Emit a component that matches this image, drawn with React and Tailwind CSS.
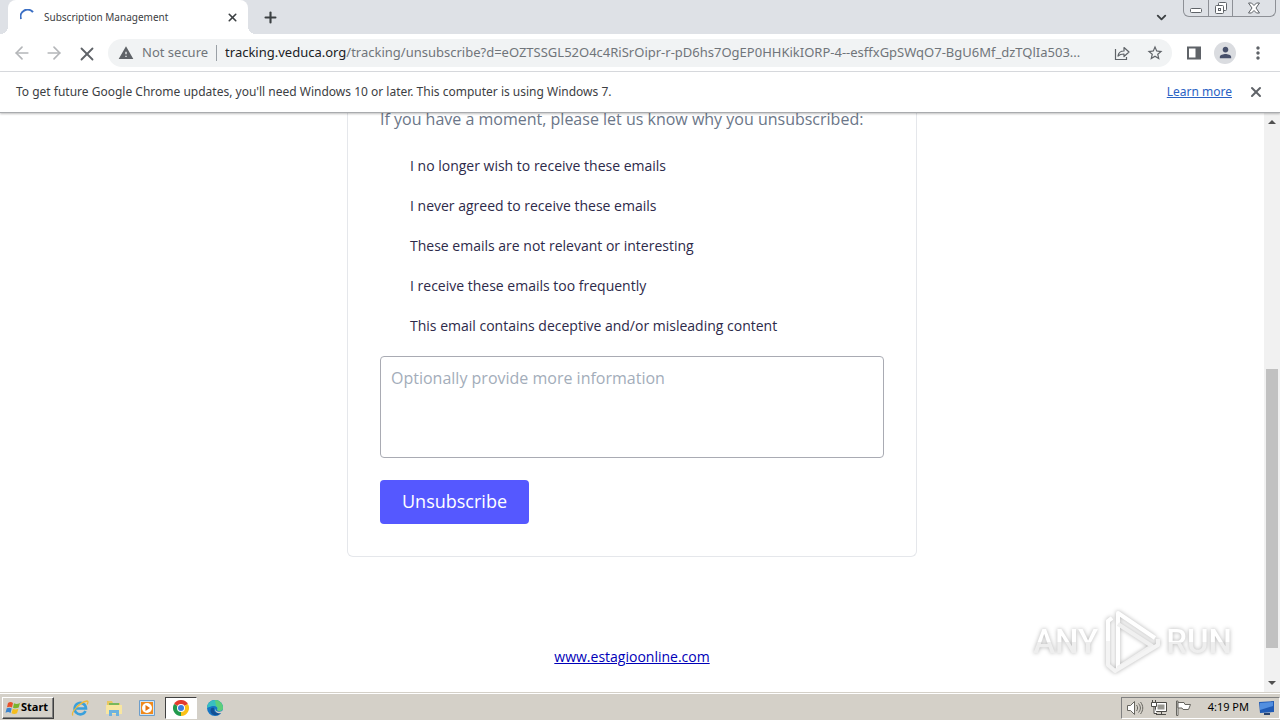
import { ArrowLeft, ArrowRight, ChevronDown, Plus, X } from 'lucide-react'
import { MdMoreVert, MdOutlineStarBorder, MdPerson, MdWarning } from 'react-icons/md'

const REASONS = [
  { id: 'no-longer', label: 'I no longer wish to receive these emails' },
  { id: 'never-agreed', label: 'I never agreed to receive these emails' },
  { id: 'not-relevant', label: 'These emails are not relevant or interesting' },
  { id: 'too-frequent', label: 'I receive these emails too frequently' },
  { id: 'deceptive', label: 'This email contains deceptive and/or misleading content' },
]

function TabStrip() {
  return (
    <header className="flex h-[34px] shrink-0 items-start bg-[#dee1e6] pr-1 pl-2">
      <div className="relative flex h-full w-60 items-center rounded-t-lg bg-white pr-2 pl-3">
        <span className="absolute bottom-0 -left-2 size-2 bg-[radial-gradient(circle_at_0_0,#dee1e6_8px,#fff_8px)]" />
        <span className="absolute -right-2 bottom-0 size-2 bg-[radial-gradient(circle_at_100%_0,#dee1e6_8px,#fff_8px)]" />
        <svg viewBox="0 0 16 16" className="size-4" fill="none">
          <path d="M1 10A7 7 0 0 1 13 3.2" stroke="#3b6fc4" strokeWidth="2" />
        </svg>
        <span className="ml-2 flex-1 text-[10px] text-[#3c4043]">Subscription Management</span>
        <button type="button" aria-label="Close tab" className="grid size-4 place-items-center text-[#3c4043]">
          <X size={13} strokeWidth={3} />
        </button>
      </div>
      <button type="button" aria-label="New tab" className="ml-3 grid h-[34px] w-5 place-items-center text-[#3c4043]">
        <Plus size={17} strokeWidth={3} />
      </button>
      <button type="button" aria-label="Search tabs" className="mr-3 ml-auto grid h-[34px] w-5 place-items-center text-[#3c4043]">
        <ChevronDown size={15} strokeWidth={3} />
      </button>
      <div className="flex h-[17px] rounded-b-md border border-t-0 border-[#8d9096] text-[#5f6368]">
        <button type="button" aria-label="Minimize" className="grid w-6 place-items-center">
          <svg viewBox="0 0 14 14" className="size-3.5" fill="#fff" stroke="currentColor">
            <rect x="1.5" y="7.5" width="11" height="4" rx="1" />
          </svg>
        </button>
        <button type="button" aria-label="Restore" className="grid w-[25px] place-items-center border-x border-[#8d9096]">
          <svg viewBox="0 0 14 14" className="size-3.5" fill="#fff" stroke="currentColor">
            <rect x="4.5" y="1.5" width="8" height="8" rx="1" />
            <rect x="1.5" y="4.5" width="8" height="8" rx="1" />
            <rect x="4.5" y="7.5" width="2" height="2" />
          </svg>
        </button>
        <button type="button" aria-label="Close window" className="grid w-[42px] place-items-center">
          <svg viewBox="0 0 14 14" className="size-3.5" fill="#fff" stroke="currentColor">
            <path d="M1.500 2h3L7 4.500 9.500 2h3L9 7l3.500 5h-3L7 9.500 4.500 12h-3L5 7z" />
          </svg>
        </button>
      </div>
    </header>
  )
}

function Toolbar() {
  return (
    <nav className="flex h-[38px] shrink-0 items-center border-b border-[#dadce0] bg-white px-3 text-[#5f6368]">
      <button type="button" aria-label="Back" className="grid size-5 place-items-center text-[#b4b6b9]">
        <ArrowLeft size={20} />
      </button>
      <button type="button" aria-label="Forward" className="ml-3 grid size-5 place-items-center text-[#b4b6b9]">
        <ArrowRight size={20} />
      </button>
      <button type="button" aria-label="Stop loading" className="ml-3 grid size-5 place-items-center">
        <X size={22} strokeWidth={2} />
      </button>
      <div className="ml-3 flex h-7 min-w-0 flex-1 items-center rounded-full bg-[#f1f3f4] pr-2 pl-2.5 text-[13px]">
        <MdWarning size={16} className="shrink-0" />
        <span className="ml-2 shrink-0 text-[#70757a]">Not secure</span>
        <span className="mx-2 h-4 w-px shrink-0 bg-[#9aa0a6]" />
        <a href="#address" className="min-w-0 flex-1 truncate text-[#70757a]">
          <span className="text-[#202124]">tracking.veduca.org</span>
          /tracking/unsubscribe?d=eOZTSSGL52O4c4RiSrOipr-r-pD6hs7OgEP0HHKikIORP-4--esffxGpSWqO7-BgU6Mf_dzTQlIa503...
        </a>
        <button type="button" aria-label="Share" className="ml-4 shrink-0">
          <svg viewBox="0 0 16 16" className="size-4" fill="none" stroke="currentColor" strokeWidth="1.200">
            <path d="M1.500 4v10.500h11V12" />
            <path d="M4 11c.5-3.500 2.500-5 6-5V2.500l5 4.500-5 4.500V9c-3 0-4.500.5-6 2z" strokeLinejoin="round" />
          </svg>
        </button>
        <button type="button" aria-label="Bookmark" className="ml-4 shrink-0">
          <MdOutlineStarBorder size={18} />
        </button>
      </div>
      <button type="button" aria-label="Side panel" className="ml-3.5 shrink-0">
        <svg viewBox="0 0 16 16" className="size-4" fill="none" stroke="currentColor" strokeWidth="2">
          <path d="M2 2.500h12v11H2z" />
          <path d="M9.500 2h5v12h-5z" fill="currentColor" stroke="none" />
        </svg>
      </button>
      <button type="button" aria-label="Profile" className="ml-3 grid size-[22px] shrink-0 place-items-center rounded-full bg-[#dadce0] text-[#47506b]">
        <MdPerson size={17} />
      </button>
      <button type="button" aria-label="Menu" className="ml-3 shrink-0">
        <MdMoreVert size={20} />
      </button>
    </nav>
  )
}

function InfoBar() {
  return (
    <aside className="relative z-10 flex h-[41px] shrink-0 items-center border-b border-[#a9abae] bg-white px-4 text-[12px] text-[#3c4043] shadow-[0_1px_2px_rgba(0,0,0,0.25)]">
      <p className="flex-1">
        To get future Google Chrome updates, you&apos;ll need Windows 10 or later. This computer is using Windows 7.
      </p>
      <a href="#learn-more" className="text-[#2a62c4] underline">
        Learn more
      </a>
      <button type="button" aria-label="Dismiss" className="ml-4 grid size-4 place-items-center text-[#5f6368]">
        <X size={16} strokeWidth={3} />
      </button>
    </aside>
  )
}

function UnsubscribeForm() {
  return (
    <form className="mx-auto max-w-[570px] rounded-b-md border border-t-0 border-[#e5e7eb] px-8 pb-8">
      <h2 className="-mt-2 mb-3 text-[16px] leading-7 text-[#6b7688]">
        If you have a moment, please let us know why you unsubscribed:
      </h2>
      <fieldset>
        {REASONS.map((r) => (
          <div key={r.id} className="flex h-10 items-center">
            <input type="radio" id={r.id} name="reason" value={r.id} className="mr-2.5 size-5 opacity-0" />
            <label htmlFor={r.id} className="text-[14px] text-[#2d2a4a]">
              {r.label}
            </label>
          </div>
        ))}
      </fieldset>
      <textarea
        aria-label="Optionally provide more information"
        placeholder="Optionally provide more information"
        className="mt-[11px] block h-[102px] w-full resize-none rounded border border-[#a9abb3] px-2.5 py-[9px] text-[16px] placeholder:text-[#a3adba]"
      />
      <button type="button" className="mt-[22px] block h-11 rounded bg-[#5558ff] px-[22px] pb-0.5 text-[18px] text-white">
        Unsubscribe
      </button>
    </form>
  )
}

function Scrollbar() {
  return (
    <div aria-hidden="true" className="flex w-4 shrink-0 flex-col items-center bg-[#f1f1f1]">
      <svg viewBox="0 0 16 17" className="h-[17px] w-4 shrink-0">
        <path d="M4 11l4-4 4 4z" fill="#505050" />
      </svg>
      <div className="grow-[239]" />
      <div className="w-3 grow-[279] bg-[#c1c1c1]" />
      <div className="grow-[27]" />
      <svg viewBox="0 0 16 17" className="h-[17px] w-4 shrink-0">
        <path d="M4 6l4 4 4-4z" fill="#505050" />
      </svg>
    </div>
  )
}

function Watermark() {
  return (
    <div className="absolute right-8 bottom-4 flex items-center gap-1 font-['Roboto',sans-serif] text-[33px] font-medium drop-shadow-[0_0_2px_rgba(0,0,0,0.3)]">
      <span className="bg-linear-to-b from-white from-50% to-[#eeeeee] to-50% bg-clip-text text-transparent">ANY</span>
      <svg viewBox="0 0 60 68" className="h-[68px] w-[60px]" fill="none" strokeWidth="4" strokeLinejoin="round">
        <path d="M16 61V5L53 30" stroke="#fff" />
        <path d="M16 16l34 22-34 22" stroke="#f0f0f0" />
        <path d="M10 10l-4 3v44l7 6 43-26v-6" stroke="#f4f4f4" />
        <path d="M10 10l-4 3v20" stroke="#fff" />
      </svg>
      <span className="bg-linear-to-b from-white from-50% to-[#eeeeee] to-50% bg-clip-text text-transparent">RUN</span>
    </div>
  )
}

function ChromeLogo() {
  return (
    <svg viewBox="0 0 16 16" className="size-4">
      <path d="M8 8L1.070 4A8 8 0 0 1 14.930 4z" fill="#e33b2e" />
      <path d="M8 8l6.930-4A8 8 0 0 1 8 16z" fill="#fbc116" />
      <path d="M8 8v8A8 8 0 0 1 1.070 4z" fill="#229a4d" />
      <circle cx="8" cy="8" r="4" fill="#fff" />
      <circle cx="8" cy="8" r="3" fill="#3c7de0" />
    </svg>
  )
}

function Taskbar() {
  return (
    <footer className="flex h-7 shrink-0 items-center border-t border-[#d4d0c8] bg-[#d4d0c8] pl-0.5 shadow-[inset_0_1px_0_#fff]">
      <button
        type="button"
        className="mt-0.5 flex h-[22px] w-[52px] items-center border border-t-white border-r-[#404040] border-b-[#404040] border-l-white pl-0.5 text-[11px] font-bold text-black shadow-[inset_-1px_-1px_0_#808080]"
      >
        <svg viewBox="0 0 16 16" className="size-4 shrink-0">
          <path d="M3 3c2-1.500 3.500-1.200 5 0L7 7.500c-1.700-1-3-1.200-5-.2z" fill="#e8512a" />
          <path d="M9 3.300c2 1 3.500 1 6-.3l-1.300 4.500c-2 1-3.700 1-5.700.2z" fill="#7ab42c" />
          <path d="M1.700 8.300c2-1 3.500-.8 5 .2L5.500 13c-1.600-1.200-3-1.200-5-.2z" fill="#3a84cf" />
          <path d="M7.800 8.800c2 1 3.600 1 5.600 0L12 13.300c-2 1-3.600 1-5.500 0z" fill="#f5bd1d" />
        </svg>
        Start
      </button>
      <div className="mt-0.5 ml-[17px] flex items-center">
        <button type="button" aria-label="Internet Explorer">
          <svg viewBox="0 0 18 18" className="size-[18px]" fill="none">
            <path d="M14.500 12A5.700 5.700 0 1 1 15 9.500H4.500" stroke="#3aa0dc" strokeWidth="2.600" />
            <path d="M2 16.500C-.5 14 8 3.500 16 2c1.500 0 1 2 0 3.500" stroke="#edb93a" strokeWidth="1.300" />
          </svg>
        </button>
        <button type="button" aria-label="File Explorer" className="ml-4">
          <svg viewBox="0 0 18 18" className="size-[18px]">
            <path d="M2 2h5l1 2h7v9H2z" fill="#e9c75f" />
            <path d="M4 4h10v5H4z" fill="#78b85b" />
            <path d="M1 6h16v9H1z" fill="#f8e6a0" />
            <path d="M4 17v-6h10v6h-3v-3H7v3z" fill="#6db2df" />
          </svg>
        </button>
        <button type="button" aria-label="Media Player" className="ml-[15px]">
          <svg viewBox="0 0 18 18" className="size-[18px]">
            <path d="M1.500 1.500h15v15h-15z" fill="#cfe4f5" stroke="#6d9ecb" />
            <path d="M3 3h12v12H3z" fill="#f08a1d" />
            <circle cx="9" cy="9" r="5" fill="#fff" />
            <path d="M7.500 6l4.500 3-4.500 3z" fill="#e5720c" />
          </svg>
        </button>
        <button
          type="button"
          aria-label="Google Chrome"
          className="ml-[9px] grid h-[22px] w-8 place-items-center border border-t-[#404040] border-r-white border-b-white border-l-[#404040] bg-white"
        >
          <ChromeLogo />
        </button>
        <button type="button" aria-label="Microsoft Edge" className="ml-[9px]">
          <svg viewBox="0 0 18 18" className="size-[18px]">
            <circle cx="9" cy="9" r="8" fill="#1775c4" />
            <path d="M1 9a8 8 0 0 1 16 0c0 3-4 4-6 2 1-1 .5-4-3-4S1.500 9 1 9z" fill="#38bfc0" />
            <path d="M9 1a8 8 0 0 1 8 8c0 3-4 4-6 2 1-1 1-3-1-4z" fill="#5dce7a" />
            <path d="M8 9c-1 4 3 6 7 4.500C12 18 5 17 4.500 12 4.500 9 6 8 8 9z" fill="#124f94" />
            <path d="M9.500 9.500c-.5 3 3 4 6 2.800L17.500 11 18 13l-2 1c-4 1-8-1-6.500-4.500z" fill="#d4d0c8" />
          </svg>
        </button>
      </div>
      <div className="mt-0.5 ml-auto flex h-[22px] items-center border border-t-[#808080] border-r-white border-b-white border-l-[#808080] px-1 text-[11px] text-black">
        <svg viewBox="0 0 18 18" className="size-[18px]" fill="#fff" stroke="#66655f">
          <path d="M1.500 6.500h3l4-4v13l-4-4h-3z" />
          <path d="M10.500 6c1.500 2 1.500 4 0 6M12.500 4.500c2.500 3 2.500 6 0 9M14.500 3c3 4 3 8 0 12" fill="none" />
        </svg>
        <svg viewBox="0 0 18 18" className="ml-1.5 size-[18px]" fill="#fff" stroke="#4c4b47">
          <path d="M5.500 3.500h11v9h-11z" />
          <path d="M7.500 5.500h7v5h-7z" fill="#989791" stroke="none" />
          <path d="M6 15.500h10M11.500 12.500v3" />
          <path d="M1.500 3.500h5v4h-5zM2.500 1v2.500M5.500 1v2.500M4 7.500v7h3" />
        </svg>
        <svg viewBox="0 0 18 18" className="ml-1.5 size-[18px]" fill="#fff" stroke="#66655f">
          <path d="M2.500 2v14.500h1.500V2z" />
          <path d="M4 3.500h6l1 2h5.500l-2 5H9l-1-1.500H4z" />
        </svg>
        <time className="ml-4">4:19 PM</time>
        <svg viewBox="0 0 16 16" className="ml-2.5 size-4">
          <path d="M0 2l15-1v11L1 13z" fill="#205bb5" />
          <path d="M1 3l13-1v4L1 10z" fill="#528fe0" />
          <path d="M5 13h6v2H5z" fill="#28436e" />
        </svg>
      </div>
    </footer>
  )
}

export default function App() {
  return (
    <div className="flex h-screen flex-col overflow-hidden bg-white font-['Noto_Sans',sans-serif]">
      <TabStrip />
      <Toolbar />
      <InfoBar />
      <div className="flex min-h-0 flex-1">
        <main className="relative min-w-0 flex-1 overflow-hidden font-['Open_Sans',sans-serif]">
          <UnsubscribeForm />
          <p className="mt-[90px] text-center text-[14px] leading-5">
            <a href="#site" className="text-[#0000b8] underline">
              www.estagioonline.com
            </a>
          </p>
          <Watermark />
        </main>
        <Scrollbar />
      </div>
      <Taskbar />
    </div>
  )
}
